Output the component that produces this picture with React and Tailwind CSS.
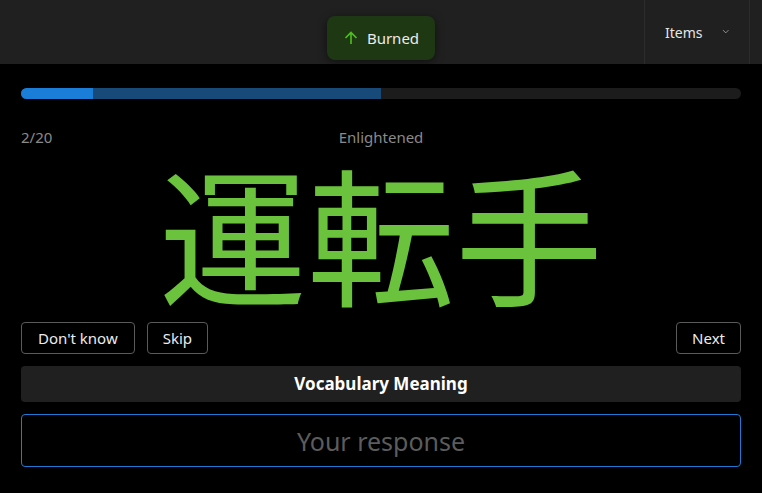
import React from 'react';

export default function App() {
  const font = { fontFamily: '"Noto Sans", "Open Sans", sans-serif' };

  return (
    <div className="relative w-[762px] h-[493px] bg-black text-white overflow-hidden" style={font}>
      <header className="h-16 bg-[#202020] flex justify-end">
        <div className="flex items-center gap-[19px] border-l border-r border-[#2c2c2c] pl-5 pr-5 mr-3 w-[106px] text-[14px] text-[#e6e6e6]">
          <span>Items</span>
          <svg width="11" height="11" viewBox="0 0 11 11" className="-mt-0.5">
            <path d="M1.5 3.5 L5.5 7.5 L9.5 3.5" stroke="#c4c4c4" strokeWidth="1" fill="none" />
          </svg>
        </div>
      </header>

      <div className="absolute left-[327px] top-4 w-[108px] h-11 rounded-lg bg-[#1e3814] shadow-[0_2px_8px_rgba(0,0,0,0.5)] flex items-center justify-center gap-2 text-[15px] text-[#ececec]">
        <svg width="16" height="16" viewBox="0 0 16 16">
          <path d="M8 14 V2.5 M2.5 8 L8 2.5 L13.5 8" stroke="#4fc021" strokeWidth="1.6" fill="none" />
        </svg>
        <span>Burned</span>
      </div>

      <main className="px-[21px] pt-6">
        <div className="h-[11px] rounded-full bg-[#1c1c1c] flex overflow-hidden">
          <div className="w-[72px] bg-[#1a7ed8]" />
          <div className="w-[288px] bg-[#174a78]" />
        </div>

        <div className="mt-[28px] h-5 grid grid-cols-3 text-[15px] leading-5 text-[#8a8a8a]">
          <span>2/20</span>
          <span className="text-center">Enlightened</span>
          <span />
        </div>

        <div
          className="h-[175px] flex items-center justify-center text-[148px] leading-none text-[#6bc23c]"
          style={{ fontFamily: '"Noto Sans CJK JP", sans-serif' }}
        >
          <span className="-mt-2">運転手</span>
        </div>

        <div className="flex justify-between">
          <div className="flex gap-3">
            <button className="h-8 px-4 border border-[#5a5a5a] rounded-sm text-[15px] text-[#ececec]">Don't know</button>
            <button className="h-8 px-[15px] border border-[#5a5a5a] rounded-sm text-[15px] text-[#ececec]">Skip</button>
          </div>
          <button className="h-8 px-[15px] border border-[#5a5a5a] rounded-sm text-[15px] text-[#ececec]">Next</button>
        </div>

        <div className="mt-3 h-9 bg-[#202020] rounded-sm flex items-center justify-center text-[17px] font-bold text-white">
          Vocabulary Meaning
        </div>

        <input
          className="mt-3 w-full h-[53px] bg-black border border-[#1f7ad6] rounded-sm text-center text-[25px] text-white placeholder:text-[#5c5c5c] outline-none"
          style={font}
          placeholder="Your response"
        />
      </main>
    </div>
  );
}
